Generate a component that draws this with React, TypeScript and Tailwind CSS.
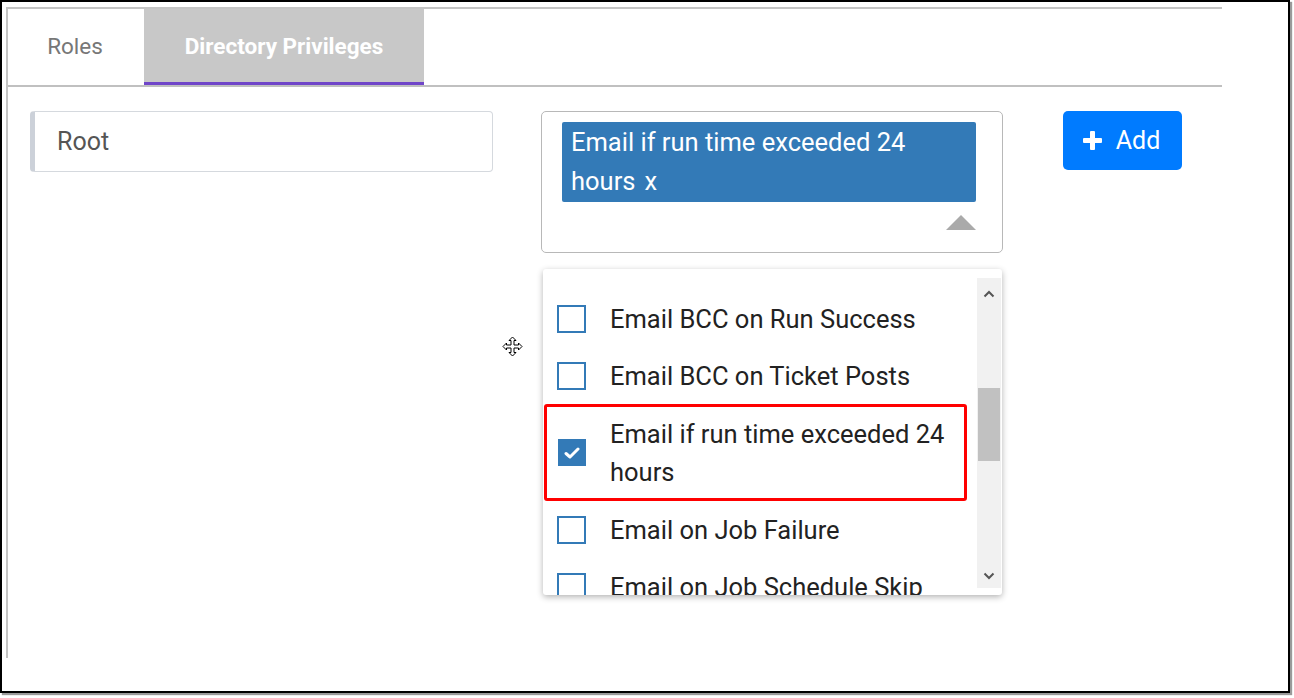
import React from "react";

const font = { fontFamily: "Roboto, 'Liberation Sans', sans-serif" };

const items = [
  { label: "Email BCC on Run Success", checked: false },
  { label: "Email BCC on Ticket Posts", checked: false },
  { label: "Email if run time exceeded 24 hours", checked: true },
  { label: "Email on Job Failure", checked: false },
  { label: "Email on Job Schedule Skip", checked: false },
];

const Checkbox: React.FC<{ checked: boolean }> = ({ checked }) =>
  checked ? (
    <div className="w-[28px] h-[27px] bg-[#337ab7] flex items-center justify-center shrink-0">
      <svg width="16" height="14" viewBox="0 0 16 14">
        <path d="M2 7.5 L6 11 L14 3" stroke="#fff" strokeWidth="3" fill="none" strokeLinecap="round" strokeLinejoin="round" />
      </svg>
    </div>
  ) : (
    <div className="w-[29px] h-[28px] border-2 border-[#337ab7] bg-white shrink-0" />
  );

const App: React.FC = () => {
  return (
    <div className="w-[1294px] h-[698px] bg-white" style={font}>
      <div className="w-[1290px] h-[693px] border-2 border-black shadow-[2px_2px_1px_#9a9a9a] bg-white">
        {/* Panel */}
        <div className="ml-[4px] mt-[5px] w-[1216px] h-[651px] border-l-2 border-t-2 border-[#c4c4c4]">
          {/* Tabs */}
          <div className="flex h-[78px] border-b-2 border-[#c0c0c0]">
            <div className="w-[136px] flex items-center justify-center text-[22.5px] text-[#777] pr-[2px]">Roles</div>
            <div className="w-[280px] flex items-center justify-center bg-[#c8c8c8] border-b-[3px] border-[#7046c9] text-[22.5px] font-bold text-white pt-[2px]">
              Directory Privileges
            </div>
          </div>

          {/* Content */}
          <div className="flex items-start pl-[22px] pt-[24px]">
            <div className="w-[463px] h-[61px] rounded-[4px] border border-[#d5d9de] border-l-[5px] border-l-[#ccd1d9] flex items-center pl-[22px] text-[25px] text-[#555]">
              Root
            </div>

            <div className="ml-[48px] flex flex-col">
              <div className="w-[462px] h-[142px] rounded-[5px] border border-[#b8b8b8] pt-[10px] px-[20px] flex flex-col">
                <div className="bg-[#337ab7] text-white text-[25.5px] leading-[39px] px-[9px] py-[1px] rounded-[2px] w-[414px]">
                  Email if run time exceeded 24 hours<span className="ml-[9px]">x</span>
                </div>
                <div className="flex justify-end mt-[13px] pr-[6px]">
                  <svg width="30" height="15" viewBox="0 0 30 15">
                    <polygon points="15,0 30,15 0,15" fill="#aaaaaa" />
                  </svg>
                </div>
              </div>

              <div className="ml-[2px] mt-[16px] w-[459px] h-[326px] bg-white shadow-[0_2px_6px_rgba(0,0,0,0.3)] rounded-[3px] flex overflow-hidden">
                <div className="flex-1 pt-[21px] overflow-hidden">
                  {items.map((it) =>
                    it.checked ? (
                      <div key={it.label} className="ml-[1px] mr-[10px] h-[97px] border-[3px] border-[#ff0000] rounded-[3px] flex items-center pl-[11px] pr-[4px]">
                        <Checkbox checked />
                        <div className="ml-[24px] text-[25.5px] leading-[38px] text-[#222]">{it.label}</div>
                      </div>
                    ) : (
                      <div key={it.label} className="h-[57px] flex items-center pl-[14px] shrink-0">
                        <Checkbox checked={false} />
                        <div className="ml-[24px] text-[25.5px] leading-[38px] text-[#222] whitespace-nowrap">{it.label}</div>
                      </div>
                    )
                  )}
                </div>
                {/* Scrollbar */}
                <div className="w-[24px] mt-[9px] mb-[7px] mr-[1px] bg-[#f1f1f1] flex flex-col items-center shrink-0">
                  <div className="h-[30px] flex items-center justify-center pt-[2px]">
                    <svg width="12" height="8" viewBox="0 0 12 8">
                      <path d="M1.5 6.5 L6 2 L10.5 6.5" stroke="#555" strokeWidth="2" fill="none" />
                    </svg>
                  </div>
                  <div className="mt-[80px] w-[22px] h-[73px] bg-[#c1c1c1]" />
                  <div className="flex-1" />
                  <div className="h-[24px] flex items-center justify-center">
                    <svg width="12" height="8" viewBox="0 0 12 8">
                      <path d="M1.5 1.5 L6 6 L10.5 1.5" stroke="#555" strokeWidth="2" fill="none" />
                    </svg>
                  </div>
                </div>
              </div>
            </div>

            <button className="ml-[60px] w-[119px] h-[59px] rounded-[5px] bg-[#007bff] text-white text-[25px] flex items-center justify-center gap-[14px] pr-[2px]">
              <svg width="19" height="19" viewBox="0 0 19 19">
                <rect x="7" y="0" width="5" height="19" rx="1" fill="#fff" />
                <rect x="0" y="7" width="19" height="5" rx="1" fill="#fff" />
              </svg>
              Add
            </button>
          </div>
        </div>
      </div>
      {/* move cursor */}
      <div className="absolute left-[502px] top-[336px]">
        <svg width="21" height="21" viewBox="0 0 21 21">
          <path
            d="M10.5 1 L14 4.5 L12 4.5 L12 9 L16.5 9 L16.5 7 L20 10.5 L16.5 14 L16.5 12 L12 12 L12 16.5 L14 16.5 L10.5 20 L7 16.5 L9 16.5 L9 12 L4.5 12 L4.5 14 L1 10.5 L4.5 7 L4.5 9 L9 9 L9 4.5 L7 4.5 Z"
            fill="#fff"
            stroke="#000"
            strokeWidth="1"
          />
        </svg>
      </div>
    </div>
  );
};

export default App;
